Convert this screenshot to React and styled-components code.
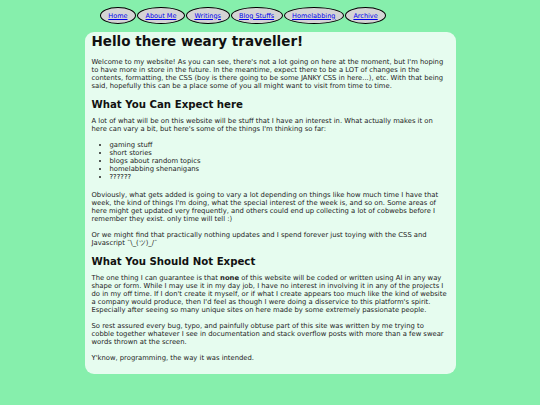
import React from 'react';
import styled, { createGlobalStyle } from 'styled-components';

const GlobalStyle = createGlobalStyle`
  body {
    margin: 0;
    background-color: #86efac;
    font-family: "DejaVu Sans", Verdana, sans-serif;
  }
`;

const Page = styled.div`
  display: flex;
  flex-direction: column;
  align-items: center;
  padding-top: 7px;
`;

const Nav = styled.nav`
  display: flex;
  gap: 1px;
  margin-right: 54px;
`;

const NavPill = styled.a`
  display: block;
  padding: 3.5px 7.5px;
  border: 1.5px solid #000;
  border-radius: 50%;
  background-color: #d4d4d4;
  color: #0000ee;
  font-size: 6.5px;
  line-height: 8px;
  text-decoration: underline;
`;

const Card = styled.main`
  box-sizing: border-box;
  width: 371px;
  margin-top: 8px;
  padding: 1px 7px 12px;
  background-color: #e6fcef;
  border-radius: 9px;
  color: #222;
  font-size: 6.8px;
  line-height: 8px;
`;

const Title = styled.h1`
  margin: 0 0 8px;
  font-size: 13.5px;
  line-height: 17px;
  color: #111;
`;

const Heading = styled.h2`
  margin: ${({ $tight }) => ($tight ? '5px' : '7px')} 0 6px;
  font-size: 10.2px;
  line-height: 13px;
  color: #111;
`;

const Para = styled.p`
  margin: 0 0 8px;
  &:last-child {
    margin-bottom: 0;
  }
`;

const List = styled.ul`
  margin: 0 0 10px;
  padding-left: 18px;
`;

const navItems = ['Home', 'About Me', 'Writings', 'Blog Stuffs', 'Homelabbing', 'Archive'];

export default function App() {
  return (
    <>
      <GlobalStyle />
      <Page>
        <Nav>
          {navItems.map(item => (
            <NavPill key={item} href="#">{item}</NavPill>
          ))}
        </Nav>
        <Card>
          <Title>Hello there weary traveller!</Title>
          <Para>
            Welcome to my website! As you can see, there's not a lot going on here at the moment, but I'm hoping
            to have more in store in the future. In the meantime, expect there to be a LOT of changes in the
            contents, formatting, the CSS (boy is there going to be some JANKY CSS in here...), etc. With that
            being said, hopefully this can be a place some of you all might want to visit from time to time.
          </Para>
          <Heading>What You Can Expect here</Heading>
          <Para>
            A lot of what will be on this website will be stuff that I have an interest in. What actually makes it on
            here can vary a bit, but here's some of the things I'm thinking so far:
          </Para>
          <List>
            <li>gaming stuff</li>
            <li>short stories</li>
            <li>blogs about random topics</li>
            <li>homelabbing shenanigans</li>
            <li>??????</li>
          </List>
          <Para>
            Obviously, what gets added is going to vary a lot depending on things like how much time I have that
            week, the kind of things I'm doing, what the special interest of the week is, and so on. Some areas of
            here might get updated very frequently, and others could end up collecting a lot of cobwebs before I
            remember they exist. only time will tell :)
          </Para>
          <Para>
            Or we might find that practically nothing updates and I spend forever just toying with the CSS and
            Javascript ¯\_(ツ)_/¯
          </Para>
          <Heading $tight>What You Should Not Expect</Heading>
          <Para>
            The one thing I can guarantee is that <b>none</b> of this website will be coded or written using AI in any way
            shape or form. While I may use it in my day job, I have no interest in involving it in any of the projects
            I do in my off time. If I don't create it myself, or if what I create appears too much like the kind of
            website a company would produce, then I'd feel as though I were doing a disservice to this platform's
            spirit. Especially after seeing so many unique sites on here made by some extremely passionate people.
          </Para>
          <Para>
            So rest assured every bug, typo, and painfully obtuse part of this site was written by me trying to
            cobble together whatever I see in documentation and stack overflow posts with more than a few swear
            words thrown at the screen.
          </Para>
          <Para>Y'know, programming, the way it was intended.</Para>
        </Card>
      </Page>
    </>
  );
}
